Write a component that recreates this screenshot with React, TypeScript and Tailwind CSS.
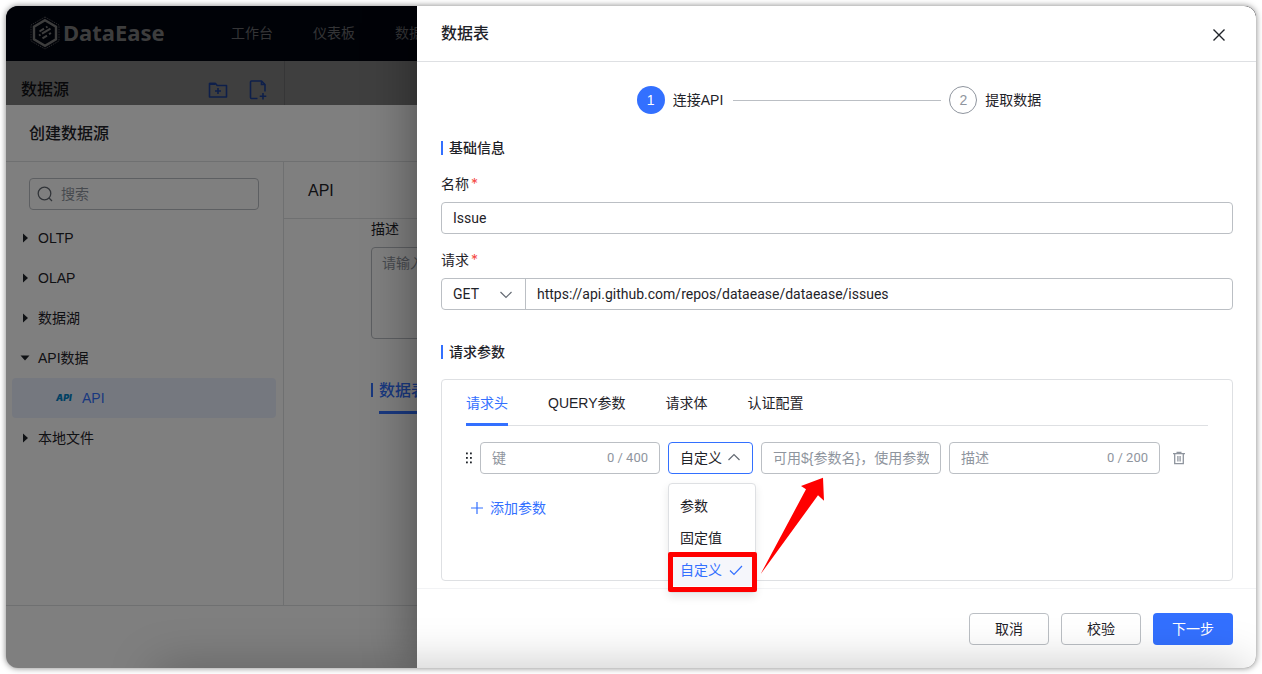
import type { ReactNode } from "react";

const navItems = ["工作台", "仪表板", "数据"];

const tree = [
  { label: "OLTP", open: false },
  { label: "OLAP", open: false },
  { label: "数据湖", open: false },
  { label: "API数据", open: true },
  { label: "本地文件", open: false },
];

const tabs = ["请求头", "QUERY参数", "请求体", "认证配置"];

const options = ["参数", "固定值", "自定义"];

function Logo() {
  return (
    <svg viewBox="0 0 30 34" className="h-[34px] w-[30px]" fill="none" stroke="currentColor">
      <path d="M15 1 29 9v16L15 33 1 25V9z" strokeWidth="0.8" strokeDasharray="1.5 1" opacity="0.8" />
      <path d="M15 4.2 26 10.6v12.8L15 29.8 4 23.4V10.6z" strokeWidth="2.4" />
      <path
        d="M9.500 15.500l4.500-2.800M16 11.500l1.500-.9M9 19.500l1.500-.9M12 17.700l8.500-5M12.500 22.300l4.500-2.700M19 18.200l2-1.200"
        strokeWidth="2"
      />
    </svg>
  );
}

function FolderPlus() {
  return (
    <svg viewBox="0 0 20 20" className="size-5" fill="none" stroke="currentColor" strokeWidth="1.6">
      <path d="M1.500 3.500h6l1.700 2h9.300v11.500h-17z" strokeLinejoin="round" />
      <path d="M10 8v6M7 11h6" />
      <path d="M1.500 3.800h6" strokeWidth="2.2" />
    </svg>
  );
}

function FilePlus() {
  return (
    <svg viewBox="0 0 20 20" className="size-5" fill="none" stroke="currentColor" strokeWidth="1.6">
      <path d="M9.500 18.500H3.500a1 1 0 0 1-1-1V2a1 1 0 0 1 1-1h10L17 4.500v7" strokeLinejoin="round" />
      <path d="M13.500 1.500v3H17M15 13v6.500M11.700 16.200h6.600" />
    </svg>
  );
}

function Chevron({ up = false }: { up?: boolean }) {
  return (
    <svg
      viewBox="0 0 14 14"
      className="pointer-events-none absolute top-2 right-3 size-3.5"
      fill="none"
      stroke="#646a73"
      strokeWidth="1.2"
    >
      <path d={up ? "M1.500 10 7 4.500 12.500 10" : "M1.500 5 7 10.500 12.500 5"} />
    </svg>
  );
}

function SectionTitle({ children }: { children: ReactNode }) {
  return (
    <h3 className="flex items-center gap-1.5 text-sm leading-5 font-medium">
      <span className="h-3.5 w-0.5 bg-[#3370ff]" />
      {children}
    </h3>
  );
}

function FieldLabel({ id, children }: { id: string; children: ReactNode }) {
  return (
    <label htmlFor={id} className="mt-4 block text-sm leading-5">
      {children}
      <span className="ml-0.5 font-['Inter',sans-serif] text-[#f54a45]">*</span>
    </label>
  );
}

function Backdrop() {
  return (
    <div className="col-start-1 row-start-1 flex min-w-0 flex-col overflow-hidden bg-[#7f7f7f]">
      <header className="flex h-[55px] shrink-0 items-center bg-[#00040f] pb-0.5 pl-6 text-[#7b7b7b]">
        <Logo />
        <span className="ml-[3px] w-[168px] font-['Noto_Sans','Noto_Sans_CJK_SC',sans-serif] text-[22px] font-bold">
          DataEase
        </span>
        <nav className="flex gap-10 text-sm text-[#68696c]">
          {navItems.map((item) => (
            <a key={item} href="#" className="whitespace-nowrap">
              {item}
            </a>
          ))}
        </nav>
      </header>

      <div className="flex h-11 shrink-0">
        <div className="flex w-[279px] items-end border-r border-[#6c6d6f] pr-4 pb-[5px] pl-[15px]">
          <h2 className="flex-1 text-base leading-5 font-medium text-[#101114]">数据源</h2>
          <button type="button" aria-label="新建文件夹" className="mr-5 text-[#1c3f94]">
            <FolderPlus />
          </button>
          <button type="button" aria-label="新建数据源" className="text-[#1c3f94]">
            <FilePlus />
          </button>
        </div>
      </div>

      <div className="flex flex-1 flex-col bg-white">
        <h2 className="h-[57px] border-b border-[#dee0e3] pl-[23px] text-base leading-[58px] font-medium">
          创建数据源
        </h2>
        <div className="flex flex-1">
          <aside className="w-[278px] shrink-0 border-r border-[#dee0e3] pt-4">
            <div className="mr-6 ml-[23px] flex h-8 items-center gap-2 rounded border border-[#bbbfc4] pr-2 pl-[7px]">
              <svg viewBox="0 0 16 16" className="size-4 shrink-0" fill="none" stroke="#646a73" strokeWidth="1.3">
                <circle cx="7.500" cy="7.500" r="6.300" />
                <path d="M12 12l3 3" />
              </svg>
              <input
                type="text"
                aria-label="搜索"
                placeholder="搜索"
                className="w-full text-sm outline-none placeholder:text-[#8f959e]"
              />
            </div>
            <ul className="mr-[7px] ml-1.5 mt-2 text-sm">
              {tree.map((node) => (
                <li key={node.label}>
                  <div className="flex h-10 items-center gap-2 pl-2">
                    <svg viewBox="0 0 10 10" className="size-2.5" fill="#1f2329">
                      <path d={node.open ? "M.500 2.500h9L5 7.500z" : "M3 .500v9L8 5z"} />
                    </svg>
                    {node.label}
                  </div>
                  {node.open && (
                    <div className="flex h-10 items-center gap-2.5 rounded bg-[#ebf1ff] pl-11 font-medium text-[#3370ff]">
                      <span className="w-4 font-['Inter',sans-serif] text-[9px] font-black text-[#0082c8] italic">
                        API
                      </span>
                      API
                    </div>
                  )}
                </li>
              ))}
            </ul>
          </aside>
          <div className="min-w-0 flex-1">
            <h3 className="h-[57px] border-b border-[#dee0e3] pl-6 text-base leading-[58px] font-medium">API</h3>
            <div className="pl-[87px]">
              <label htmlFor="desc" className="block text-sm leading-5">
                描述
              </label>
              <textarea
                id="desc"
                placeholder="请输入"
                className="mt-2 block h-[92px] w-full resize-none rounded border border-[#bbbfc4] px-2.5 py-[5px] text-sm placeholder:text-[#8f959e]"
              />
              <div className="mt-10 flex items-start gap-1.5">
                <span className="mt-1 h-3.5 w-0.5 bg-[#3370ff]" />
                <h4 className="flex-1 border-b-[3px] border-[#3370ff] pb-2 text-base leading-6 font-medium text-[#3370ff]">
                  数据表
                </h4>
              </div>
            </div>
          </div>
        </div>
        <div className="h-[63px] border-t border-[#dee0e3]" />
      </div>
    </div>
  );
}

function TypeSelect() {
  return (
    <div className="relative">
      <select
        aria-label="参数类型"
        defaultValue="自定义"
        className="h-8 w-[85px] appearance-none rounded border border-[#3370ff] bg-white pl-[11px] outline-none"
      >
        {options.map((option) => (
          <option key={option}>{option}</option>
        ))}
      </select>
      <Chevron up />

      <ul
        role="listbox"
        className="absolute top-[41px] left-0 z-10 w-[88px] rounded border border-[#dee0e3] bg-white py-1.5 shadow-[0_4px_8px_rgba(31,35,41,0.1)]"
      >
        {options.map((option) => {
          const selected = option === "自定义";
          return (
            <li
              key={option}
              role="option"
              aria-selected={selected}
              className={
                selected
                  ? "flex h-8 items-center justify-between bg-[#f5f6fb] pr-3 pl-[11px] text-[#3370ff]"
                  : "flex h-8 items-center pl-[11px]"
              }
            >
              {option}
              {selected && (
                <svg viewBox="0 0 14 14" className="size-3.5" fill="none" stroke="currentColor" strokeWidth="1.2">
                  <path d="M1 7.500 5 11.500 13 3" />
                </svg>
              )}
            </li>
          );
        })}
      </ul>

      {/* highlight and pointer */}
      <div className="absolute top-[110px] left-0 z-20 h-10 w-[89px] rounded-xs border-[5px] border-[#ff0000]" />
      <svg viewBox="0 0 66 98" className="absolute top-[35px] left-[92px] z-20 h-[98px] w-[66px]" fill="#ff0000">
        <path d="M.700 97 46 12.300 41 9 63 .700 64 23.700 58 18.300z" />
      </svg>
    </div>
  );
}

function ParamRow() {
  return (
    <div className="mt-4 flex items-center gap-2 text-sm">
      <svg viewBox="0 0 6 12" className="h-3 w-1.5 shrink-0" fill="#1f2329">
        {[0.5, 5, 9.5].map((y) => (
          <g key={y}>
            <rect x="0" y={y} width="1.8" height="1.8" />
            <rect x="4" y={y} width="1.8" height="1.8" />
          </g>
        ))}
      </svg>
      <div className="flex h-8 w-45 items-center rounded border border-[#bbbfc4] px-[11px]">
        <input
          type="text"
          aria-label="键"
          placeholder="键"
          className="w-full min-w-0 outline-none placeholder:text-[#8f959e]"
        />
        <span className="shrink-0 font-['Roboto',sans-serif] text-[13px] text-[#8f959e]">0 / 400</span>
      </div>
      <TypeSelect />
      <input
        type="text"
        aria-label="值"
        placeholder="可用${参数名}，使用参数"
        className="h-8 w-45 rounded border border-[#bbbfc4] px-[11px] placeholder:text-[#8f959e]"
      />
      <div className="flex h-8 min-w-0 flex-1 items-center rounded border border-[#bbbfc4] px-[11px]">
        <input
          type="text"
          aria-label="描述"
          placeholder="描述"
          className="w-full min-w-0 outline-none placeholder:text-[#8f959e]"
        />
        <span className="shrink-0 font-['Roboto',sans-serif] text-[13px] text-[#8f959e]">0 / 200</span>
      </div>
      <button type="button" aria-label="删除" className="w-10 pl-1 text-[#8f959e]">
        <svg viewBox="0 0 14 14" className="size-3.5" fill="none" stroke="currentColor" strokeWidth="1.3">
          <path d="M1 2.700h12M4.500 1.500h5M2.700 3v9.600h8.600V3M5.900 5v5.500M8.100 5v5.500" />
        </svg>
      </button>
    </div>
  );
}

function Drawer() {
  return (
    <section className="flex w-[839px] flex-col bg-white shadow-[0_0_48px_rgba(0,0,0,0.4)]">
      <header className="flex h-14 shrink-0 items-center justify-between border-b border-[#dee0e3] px-6">
        <h1 className="text-base font-medium">数据表</h1>
        <button type="button" aria-label="关闭" className="pt-0.5 pr-[7px]">
          <svg viewBox="0 0 12 12" className="size-3" fill="none" stroke="#1f2329" strokeWidth="1.4">
            <path d="M.500.500l11 11M11.500.500l-11 11" />
          </svg>
        </button>
      </header>

      <div className="flex flex-1 flex-col pt-6 pr-[23px] pb-[7px] pl-6">
        <ol className="mb-6 flex items-center justify-center gap-2 pl-1 text-sm">
          <li className="flex items-center gap-2">
            <span className="flex size-7 items-center justify-center rounded-full bg-[#3370ff] text-white">1</span>
            连接API
          </li>
          <li aria-hidden className="ml-0.5 h-px w-52 bg-[#bbbfc4]" />
          <li className="flex items-center gap-2">
            <span className="flex size-7 items-center justify-center rounded-full border border-[#8f959e] text-[#8f959e]">
              2
            </span>
            提取数据
          </li>
        </ol>

        <SectionTitle>基础信息</SectionTitle>
        <FieldLabel id="name">名称</FieldLabel>
        <input
          id="name"
          type="text"
          defaultValue="Issue"
          className="mt-2 h-8 shrink-0 rounded border border-[#bbbfc4] px-[11px] font-['Roboto',sans-serif] text-sm"
        />

        <FieldLabel id="url">请求</FieldLabel>
        <div className="mt-2 mb-8 flex h-8 shrink-0 rounded border border-[#bbbfc4] font-['Roboto',sans-serif] text-sm">
          <div className="relative border-r border-[#bbbfc4]">
            <select
              aria-label="请求方式"
              defaultValue="GET"
              className="h-full w-[83px] appearance-none bg-transparent pl-[11px] outline-none"
            >
              <option>GET</option>
              <option>POST</option>
            </select>
            <Chevron />
          </div>
          <input
            id="url"
            type="text"
            defaultValue="https://api.github.com/repos/dataease/dataease/issues"
            className="min-w-0 flex-1 px-[11px] outline-none"
          />
        </div>

        <SectionTitle>请求参数</SectionTitle>
        <div className="mt-[17px] flex-1 rounded border border-[#dee0e3] px-6 pb-[62px]">
          <div role="tablist" className="flex gap-10 border-b border-[#dee0e3] text-sm">
            {tabs.map((tab, i) => (
              <button
                key={tab}
                type="button"
                role="tab"
                aria-selected={i === 0}
                className={
                  i === 0
                    ? "-mb-px h-[46px] border-y-[3px] border-t-transparent border-b-[#3370ff] text-[#3370ff]"
                    : "-mb-px h-[46px]"
                }
              >
                {tab}
              </button>
            ))}
          </div>
          <ParamRow />
          <button type="button" className="mt-6 flex items-center gap-1.5 pl-1 text-sm leading-5 text-[#3370ff]">
            <svg viewBox="0 0 14 14" className="size-3.5" fill="none" stroke="currentColor" strokeWidth="1.2">
              <path d="M7 1v12M1 7h12" />
            </svg>
            添加参数
          </button>
        </div>
      </div>

      <footer className="flex shrink-0 justify-end gap-3 border-t border-[#f2f3f5] pt-6 pr-[23px] pb-[23px] text-sm">
        <button type="button" className="h-8 w-20 rounded border border-[#bbbfc4] bg-white">
          取消
        </button>
        <button type="button" className="h-8 w-20 rounded border border-[#bbbfc4] bg-white">
          校验
        </button>
        <button type="button" className="h-8 w-20 rounded bg-[#3370ff] text-white">
          下一步
        </button>
      </footer>
    </section>
  );
}

export default function App() {
  return (
    <main className="flex min-h-screen bg-white p-1.5 font-['Liberation_Sans','Noto_Sans_CJK_SC',sans-serif] text-[#1f2329]">
      <div className="grid min-w-0 flex-1 overflow-hidden rounded-xl shadow-[0_0_6px_rgba(0,0,0,0.5)]">
        <Backdrop />
        <div className="z-10 col-start-1 row-start-1 flex justify-end bg-black/50">
          <Drawer />
        </div>
        <div className="pointer-events-none z-20 col-start-1 row-start-1 mr-2.5 -mb-10 ml-[150px] h-10 self-end shadow-[0_0_48px_rgba(0,0,0,0.25)]" />
      </div>
    </main>
  );
}
